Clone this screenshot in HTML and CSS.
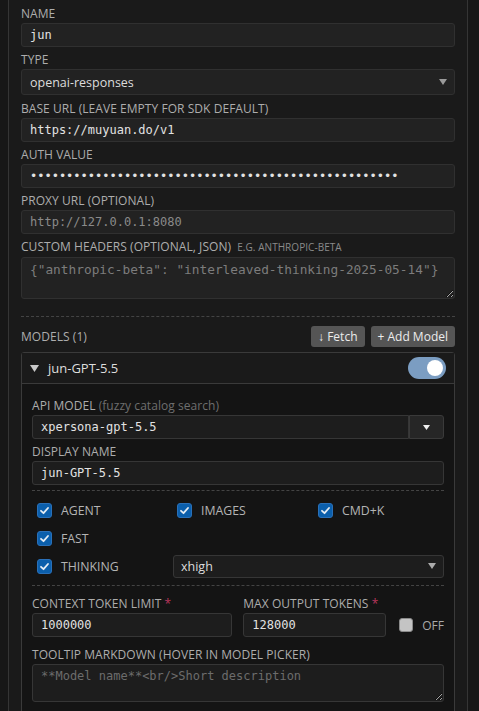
FILE: index.html
```html
<!DOCTYPE html>
<html lang="en">
<head>
<meta charset="utf-8">
<title>Provider settings</title>
<link rel="stylesheet" href="styles.css">
</head>
<body>
<div class="panel">
  <div class="field">
    <label class="lbl" for="p-name">Name</label>
    <input class="inp" id="p-name" type="text" value="jun">
  </div>
  <div class="field field-select">
    <label class="lbl" for="p-type">Type</label>
    <div class="select-wrap">
      <select class="sel" id="p-type"><option>openai-responses</option></select>
      <svg class="caret" viewBox="0 0 8 6"><polygon points="0,0 8,0 4,6" fill="#9a9a9a"/></svg>
    </div>
  </div>
  <div class="field">
    <label class="lbl" for="p-base">Base URL (leave empty for SDK default)</label>
    <input class="inp" id="p-base" type="text" value="https://muyuan.do/v1">
  </div>
  <div class="field">
    <label class="lbl" for="p-auth">Auth value</label>
    <input class="inp" id="p-auth" type="password" value="xxxxxxxxxxxxxxxxxxxxxxxxxxxxxxxxxxxxxxxxxxxxxxxxxxx">
  </div>
  <div class="field">
    <label class="lbl" for="p-proxy">Proxy URL (optional)</label>
    <input class="inp" id="p-proxy" type="text" placeholder="http://127.0.0.1:8080">
  </div>
  <div class="field">
    <label class="lbl" for="p-headers">Custom headers (optional, JSON) <span class="eg">e.g. anthropic-beta</span></label>
    <textarea class="ta ta-headers" id="p-headers" placeholder='{"anthropic-beta": "interleaved-thinking-2025-05-14"}'></textarea>
  </div>

  <div class="sep"></div>

  <div class="models-head">
    <span class="lbl lbl-inline">Models (1)</span>
    <div class="btns">
      <button class="btn" type="button">↓ Fetch</button>
      <button class="btn" type="button">+ Add Model</button>
    </div>
  </div>

  <div class="card">
    <div class="card-head">
      <svg class="tri" viewBox="0 0 9 7"><polygon points="0,0 9,0 4.5,7" fill="#c8c8c8"/></svg>
      <span class="card-name">jun-GPT-5.5</span>
      <span class="toggle" role="switch" aria-checked="true"></span>
    </div>
    <div class="card-body">
      <div class="field">
        <label class="lbl" for="m-api">API model <span class="hint">(fuzzy catalog search)</span></label>
        <div class="combo">
          <input class="inp inp-in" id="m-api" type="text" value="xpersona-gpt-5.5">
          <button class="drop" type="button" aria-label="Show models">
            <svg viewBox="0 0 7 5" width="7" height="5"><polygon points="0,0 7,0 3.5,5" fill="#eeeeee"/></svg>
          </button>
        </div>
      </div>
      <div class="field">
        <label class="lbl" for="m-display">Display name</label>
        <input class="inp inp-in" id="m-display" type="text" value="jun-GPT-5.5">
      </div>

      <div class="sep sep-in"></div>

      <div class="checks">
        <label class="chk"><span class="box"><svg viewBox="0 0 11 11"><path d="M2 5.8 L4.5 8.2 L9 3" fill="none" stroke="#e4ecf4" stroke-width="1.8" stroke-linecap="round" stroke-linejoin="round"/></svg></span>Agent</label>
        <label class="chk"><span class="box"><svg viewBox="0 0 11 11"><path d="M2 5.8 L4.5 8.2 L9 3" fill="none" stroke="#e4ecf4" stroke-width="1.8" stroke-linecap="round" stroke-linejoin="round"/></svg></span>Images</label>
        <label class="chk"><span class="box"><svg viewBox="0 0 11 11"><path d="M2 5.8 L4.5 8.2 L9 3" fill="none" stroke="#e4ecf4" stroke-width="1.8" stroke-linecap="round" stroke-linejoin="round"/></svg></span>Cmd+K</label>
        <label class="chk"><span class="box"><svg viewBox="0 0 11 11"><path d="M2 5.8 L4.5 8.2 L9 3" fill="none" stroke="#e4ecf4" stroke-width="1.8" stroke-linecap="round" stroke-linejoin="round"/></svg></span>Fast</label>
        <div class="think-row">
          <label class="chk chk-think"><span class="box"><svg viewBox="0 0 11 11"><path d="M2 5.8 L4.5 8.2 L9 3" fill="none" stroke="#e4ecf4" stroke-width="1.8" stroke-linecap="round" stroke-linejoin="round"/></svg></span>Thinking</label>
          <div class="select-wrap think-sel">
            <select class="sel sel-in"><option>xhigh</option></select>
            <svg class="caret" viewBox="0 0 8 6"><polygon points="0,0 8,0 4,6" fill="#ababab"/></svg>
          </div>
        </div>
      </div>

      <div class="sep sep-in2"></div>

      <div class="limits">
        <div>
          <label class="lbl" for="m-ctx">Context token limit <span class="req">*</span></label>
          <input class="inp inp-in" id="m-ctx" type="text" value="1000000">
        </div>
        <div>
          <label class="lbl" for="m-max">Max output tokens <span class="req">*</span></label>
          <div class="max-row">
            <input class="inp inp-in inp-max" id="m-max" type="text" value="128000">
            <span class="box box-off"></span>
            <span class="off">Off</span>
          </div>
        </div>
      </div>

      <div class="field">
        <label class="lbl" for="m-tip">Tooltip markdown (hover in model picker)</label>
        <textarea class="ta ta-tip" id="m-tip" placeholder="**Model name**<br/>Short description"></textarea>
      </div>
    </div>
  </div>
</div>
</body>
</html>
```

FILE: styles.css
```css
:root {
  color-scheme: dark;
}

* {
  box-sizing: border-box;
}

body {
  margin: 0;
  background: #171717;
  font-family: "Open Sans", "Noto Sans", sans-serif;
  font-size: 12px;
  color: #cccccc;
}

.panel {
  margin-left: 8px;
  width: 460px;
  min-height: 100vh;
  background: #1a1a1a;
  border-left: 1px solid #353535;
  border-right: 1px solid #353535;
  padding: 6px 12px 20px;
}

.field {
  margin-bottom: 5px;
}

.field-select {
  margin-bottom: 6px;
}

.lbl {
  display: block;
  line-height: 15px;
  margin-bottom: 2px;
  color: #adadad;
  text-transform: uppercase;
  white-space: nowrap;
  letter-spacing: 0.05px;
}

.lbl-inline {
  margin-bottom: 0;
}

.eg {
  font-size: 10px;
  color: #8a8a8a;
  margin-left: 3px;
}

.hint {
  text-transform: none;
  color: #6e6e6e;
}

.req {
  color: #b8365c;
}

/* text inputs */
.inp {
  display: block;
  width: 100%;
  height: 24px;
  padding: 0 8px;
  background: #222222;
  border: 1px solid #303030;
  border-radius: 3px;
  color: #e2e2e2;
  font-family: "DejaVu Sans Mono", monospace;
  font-size: 12px;
  outline: none;
}

.inp::placeholder {
  color: #8a8a8a;
}

.inp-in {
  background: #1d1d1d;
  border-color: #363636;
}

/* selects */
.select-wrap {
  position: relative;
}

.sel {
  appearance: none;
  -webkit-appearance: none;
  display: block;
  width: 100%;
  height: 26px;
  padding: 0 24px 0 8px;
  background: #222222;
  border: 1px solid #303030;
  border-radius: 3px;
  color: #dcdcdc;
  font-family: inherit;
  font-size: 12.5px;
  outline: none;
}

.caret {
  position: absolute;
  right: 8px;
  top: 50%;
  width: 8px;
  height: 6px;
  margin-top: -3px;
  pointer-events: none;
}

/* textareas */
.ta {
  display: block;
  width: 100%;
  padding: 4px 8px;
  background: #222222;
  border: 1px solid #303030;
  border-radius: 3px;
  color: #dddddd;
  font-family: "DejaVu Sans Mono", monospace;
  line-height: 15px;
  resize: vertical;
  outline: none;
}

.ta::placeholder {
  color: #7c7c7c;
}

.ta-headers {
  height: 42px;
  font-size: 12.8px;
}

.ta-tip {
  height: 38px;
  font-size: 12px;
  background: #1d1d1d;
  border-color: #363636;
}

.ta-tip::placeholder {
  color: #6c6c6c;
}

/* dashed separators */
.sep {
  height: 0;
  border-top: 1px dashed #444444;
  margin: 17px 0 9px;
}

.sep-in {
  margin: 2px 0 5px;
}

.sep-in2 {
  margin: 5px 0 10px;
}

/* models header */
.models-head {
  display: flex;
  align-items: center;
  justify-content: space-between;
  margin-bottom: 5px;
}

.btns {
  display: flex;
  gap: 6px;
}

.btn {
  height: 21px;
  padding: 0 7px;
  border: 0;
  border-radius: 3px;
  background: #555555;
  color: #ececec;
  font-family: inherit;
  font-size: 12px;
  line-height: 21px;
}

/* model card */
.card {
  border: 1px solid #3a3a3a;
  border-radius: 3px;
  background: #141414;
}

.card-head {
  display: flex;
  align-items: center;
  height: 31px;
  padding: 0 8px;
  border-bottom: 1px solid #3a3a3a;
  background: #1a1a1a;
}

.tri {
  width: 9px;
  height: 7px;
  margin-right: 9px;
  flex: none;
}

.card-name {
  flex: 1;
  font-size: 13px;
  color: #dedede;
}

.toggle {
  position: relative;
  width: 38px;
  height: 22px;
  border-radius: 11px;
  background: #7b9dc2;
}

.toggle::after {
  content: "";
  position: absolute;
  right: 3px;
  top: 3px;
  width: 16px;
  height: 16px;
  border-radius: 50%;
  background: #ffffff;
}

.card-body {
  padding: 14px 10px 12px;
}

.combo {
  display: flex;
}

.combo .inp {
  flex: 1;
  border-radius: 3px 0 0 3px;
}

.drop {
  width: 35px;
  height: 24px;
  padding: 0;
  background: #262626;
  border: 1px solid #3a3a3a;
  border-radius: 0 3px 3px 0;
  display: flex;
  align-items: center;
  justify-content: center;
}

/* capability checkboxes */
.checks {
  display: grid;
  grid-template-columns: 140px 141px 1fr;
  grid-auto-rows: 28px;
  padding-left: 5px;
}

.chk {
  display: flex;
  align-items: center;
  color: #b4b4b4;
  text-transform: uppercase;
  font-size: 12.3px;
}

.box {
  width: 15px;
  height: 15px;
  flex: none;
  margin-right: 9px;
  border-radius: 3px;
  background: #0b5fac;
  border: 1px solid #2a70b8;
  display: inline-flex;
  align-items: center;
  justify-content: center;
}

.box svg {
  width: 11px;
  height: 11px;
}

.think-row {
  grid-column: 1 / -1;
  display: flex;
  align-items: center;
}

.chk-think {
  width: 136px;
  flex: none;
}

.think-sel {
  flex: 1;
}

.sel-in {
  height: 23px;
  padding-left: 7px;
  background: #1d1d1d;
  border-color: #363636;
}

/* token limits */
.limits {
  display: grid;
  grid-template-columns: 1fr 1fr;
  column-gap: 11px;
  margin-bottom: 10px;
}

.max-row {
  display: flex;
  align-items: center;
}

.inp-max {
  width: 143px;
  flex: none;
}

.box-off {
  width: 14px;
  height: 14px;
  margin: 0 0 0 13px;
  background: #c4c4c4;
  border: 1px solid #8a8a8a;
}

.off {
  margin-left: 9px;
  color: #a9a9a9;
  text-transform: uppercase;
}
```
